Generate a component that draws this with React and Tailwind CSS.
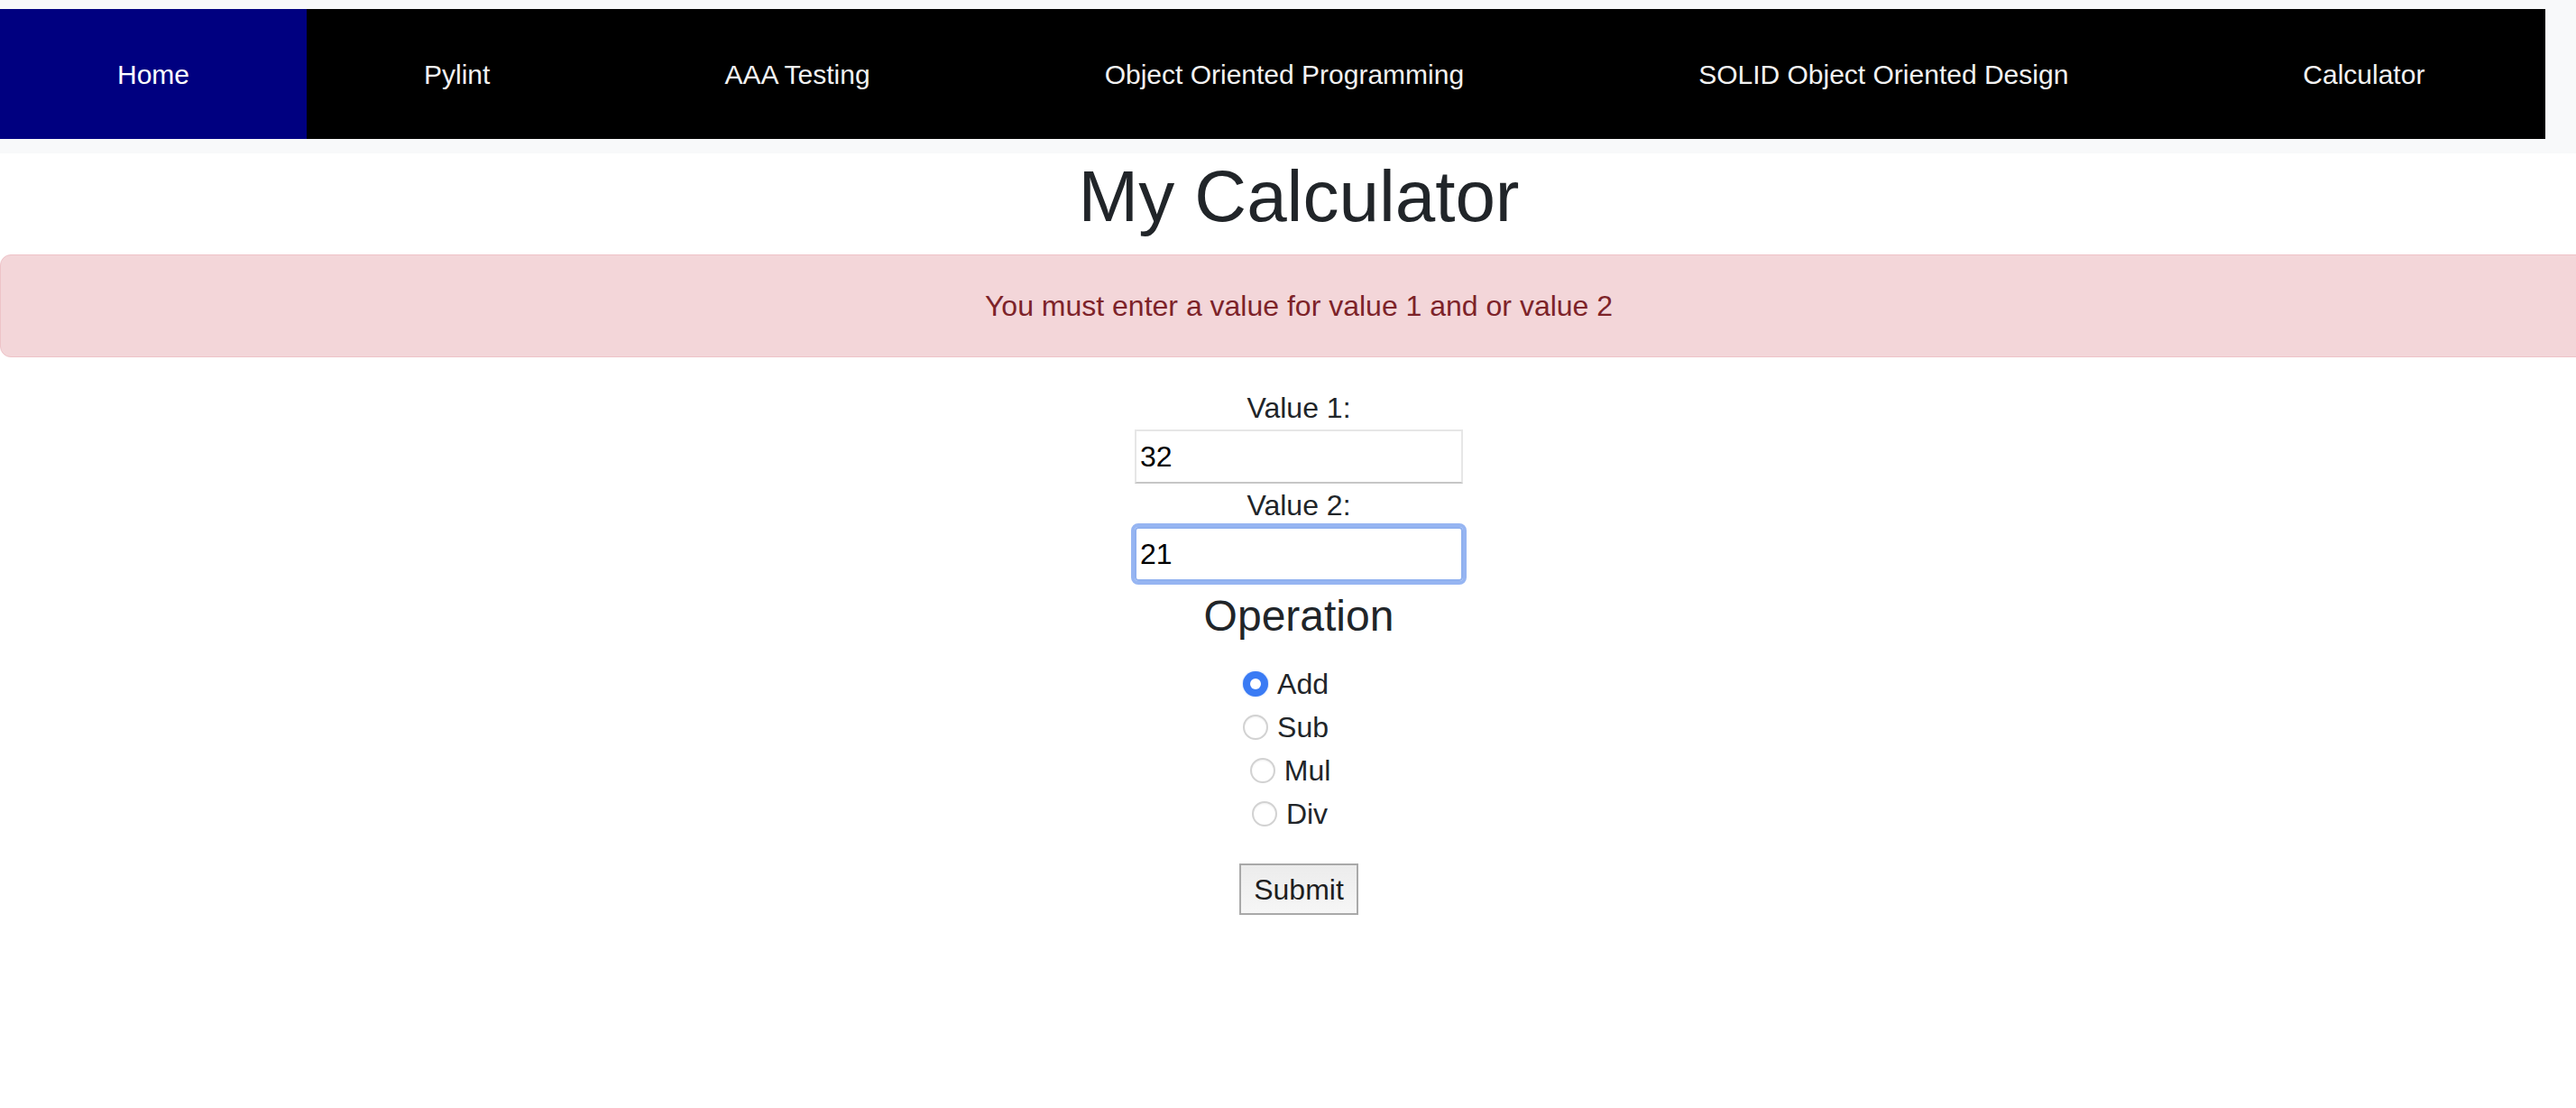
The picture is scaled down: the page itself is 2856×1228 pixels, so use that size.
import React from 'react';

const navItems = [
  { label: 'Home', active: true },
  { label: 'Pylint' },
  { label: 'AAA Testing' },
  { label: 'Object Oriented Programming' },
  { label: 'SOLID Object Oriented Design' },
  { label: 'Calculator' },
];

const operations = [
  { label: 'Add', checked: true, shift: '' },
  { label: 'Sub', shift: '' },
  { label: 'Mul', shift: 'pl-[10px]' },
  { label: 'Div', shift: 'pl-[9px]' },
];

const Radio = ({ checked }) =>
  checked ? (
    <span className="w-[28px] h-[28px] rounded-full bg-[#3a7bf4] flex items-center justify-center shadow-[0_0_2px_rgba(58,123,244,0.5)]">
      <span className="w-[12px] h-[12px] rounded-full bg-white" />
    </span>
  ) : (
    <span className="w-[28px] h-[28px] rounded-full bg-white border-2 border-[#d2d2d2] shadow-[inset_0_1px_2px_rgba(0,0,0,0.06)]" />
  );

const App = () => {
  return (
    <div className="w-full min-h-screen overflow-hidden bg-white text-[#212529] font-['Liberation_Sans',Arial,sans-serif]">
      {/* Nav band */}
      <div className="w-full bg-[#f8f9fa] pt-[10px] pb-[16px]">
        <nav className="flex w-max bg-black pr-[4px]">
          {navItems.map(item => (
            <a
              key={item.label}
              className={`h-[144px] flex items-center px-[130px] text-[30px] ${item.active ? 'bg-[#000080] text-white' : 'text-[#f2f2f2]'}`}
            >
              {item.label}
            </a>
          ))}
        </nav>
      </div>

      {/* Content */}
      <main className="w-[2880px] flex flex-col items-center">
        <h1 className="text-[80px] leading-[96px] font-normal mb-[16px]">My Calculator</h1>

        <div className="w-full h-[114px] flex items-center justify-center bg-[#f3d6d9] border border-[#eec3c8] rounded-[12px] text-[32px] leading-[48px] text-[#7d2329]">
          You must enter a value for value 1 and or value 2
        </div>

        <form className="mt-[32px] flex flex-col items-center text-[32px]">
          <label className="leading-[48px]">Value 1:</label>
          <div className="w-[364px] h-[60px] border-2 border-[#e6e6e6] border-b-[#c6c6c6] bg-white flex items-center pl-[4px] text-black">
            32
          </div>
          <label className="leading-[48px]">Value 2:</label>
          <div className="w-[364px] h-[60px] border-2 border-[#8fb0ef] rounded-[4px] outline-[4px] outline-solid outline-[#96b5f2] bg-white flex items-center pl-[4px] text-black">
            21
          </div>

          <h4 className="mt-[10px] text-[48px] leading-[58px] font-normal">Operation</h4>

          <div className="mt-[22px] flex flex-col">
            {operations.map(op => (
              <div key={op.label} className={`h-[48px] flex items-center justify-center gap-[10px] pr-[29px] ${op.shift}`}>
                <Radio checked={op.checked} />
                <span>{op.label}</span>
              </div>
            ))}
          </div>

          <button
            type="button"
            className="mt-[31px] h-[57px] px-[14px] border-2 border-[#a9a9a9] bg-gradient-to-b from-[#ececec] to-[#f6f6f6] text-[32px] text-[#1e1e1e] flex items-center"
          >
            Submit
          </button>
        </form>
      </main>
    </div>
  );
};

export default App;
